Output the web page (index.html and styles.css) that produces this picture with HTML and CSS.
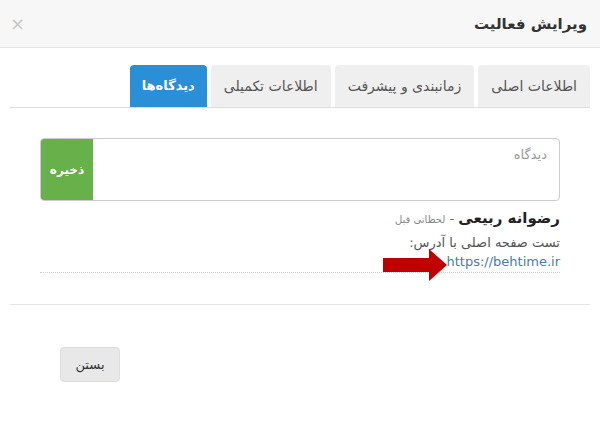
FILE: index.html
```html
<!DOCTYPE html>
<html lang="fa" dir="rtl">
<head>
  <meta charset="UTF-8">
  <title>ویرایش فعالیت</title>
  <link rel="stylesheet" href="styles.css">
</head>
<body>
  <div class="modal">
    <div class="modal-header">
      <h4>ویرایش فعالیت</h4>
      <span class="close">&times;</span>
    </div>

    <div class="modal-body">
      <ul class="tabs">
        <li>اطلاعات اصلی</li>
        <li>زمانبندی و پیشرفت</li>
        <li>اطلاعات تکمیلی</li>
        <li class="active">دیدگاه‌ها</li>
      </ul>

      <div class="comments">
        <div class="comment-form">
          <div class="comment-input">دیدگاه</div>
          <button class="save">ذخیره</button>
        </div>

        <div class="comment">
          <div class="comment-head">
            <b>رضوانه ربیعی</b> - <small>لحظاتی قبل</small>
          </div>
          <div class="comment-text">تست صفحه اصلی با آدرس:</div>
          <div class="comment-link"><a href="#">https://behtime.ir</a></div>
          <svg class="arrow" width="64" height="32" viewBox="0 0 64 32">
            <polygon points="0,9 46,9 46,0 64,16 46,32 46,23 0,23" fill="#c00000"/>
          </svg>
        </div>
      </div>
    </div>

    <div class="modal-footer">
      <button class="btn-close">بستن</button>
    </div>
  </div>
</body>
</html>
```

FILE: styles.css
```css
body {
  margin: 0;
  font-family: "DejaVu Sans", sans-serif;
  background-color: #fff;
  color: #333;
}

.modal {
  width: 600px;
  height: 427px;
}

.modal-header {
  display: flex;
  align-items: center;
  justify-content: space-between;
  height: 47px;
  padding: 0 13px 0 10px;
  background-color: #f7f7f7;
  border-bottom: 1px solid #e5e5e5;
}

.modal-header h4 {
  margin: 0;
  font-size: 15px;
  font-weight: bold;
  color: #333;
}

.close {
  font-size: 18px;
  color: #c8c8c8;
  line-height: 1;
}

.modal-body {
  padding: 17px 10px 0;
}

.tabs {
  display: flex;
  gap: 4px;
  margin: 0;
  padding: 0;
  list-style: none;
  border-bottom: 1px solid #ddd;
}

.tabs li {
  height: 42px;
  line-height: 42px;
  padding: 0 13px;
  background-color: #efefef;
  border-radius: 4px 4px 0 0;
  font-size: 14px;
  color: #555;
}

.tabs li.active {
  padding: 0 12px;
  background-color: #2b8fd8;
  color: #fff;
  font-weight: bold;
  font-size: 13px;
}

.comments {
  padding: 30px 30px 0 30px;
}

.comment-form {
  display: flex;
  height: 61px;
  border: 1px solid #ccc;
  border-radius: 4px;
  overflow: hidden;
}

.comment-input {
  flex: 1;
  padding: 8px 12px;
  font-size: 13px;
  color: #999;
}

.save {
  width: 52px;
  border: none;
  background-color: #67b04a;
  color: #fff;
  font-family: inherit;
  font-size: 12px;
  font-weight: bold;
}

.comment {
  position: relative;
  padding: 8px 0 1px;
  border-bottom: 1px dotted #ccc;
}

.comment-head {
  font-size: 13px;
  color: #666;
}

.comment-head b {
  color: #222;
  font-size: 15px;
}

.comment-head small {
  font-size: 10px;
  color: #888;
}

.comment-text {
  margin-top: 6px;
  font-size: 13px;
  line-height: 19px;
  color: #555;
}

.comment-link {
  font-size: 13px;
  line-height: 19px;
  direction: ltr;
  text-align: right;
}

.comment-link a {
  color: #4a7ca6;
  text-decoration: none;
}

.arrow {
  position: absolute;
  left: 343px;
  top: 48px;
}

.modal-footer {
  margin: 31px 10px 0;
  padding: 42px 50px 0;
  border-top: 1px solid #e5e5e5;
  direction: ltr;
}

.btn-close {
  width: 60px;
  height: 35px;
  background-color: #e8e8e8;
  border: 1px solid #ddd;
  border-radius: 4px;
  font-family: inherit;
  font-size: 13px;
  color: #333;
}
```
